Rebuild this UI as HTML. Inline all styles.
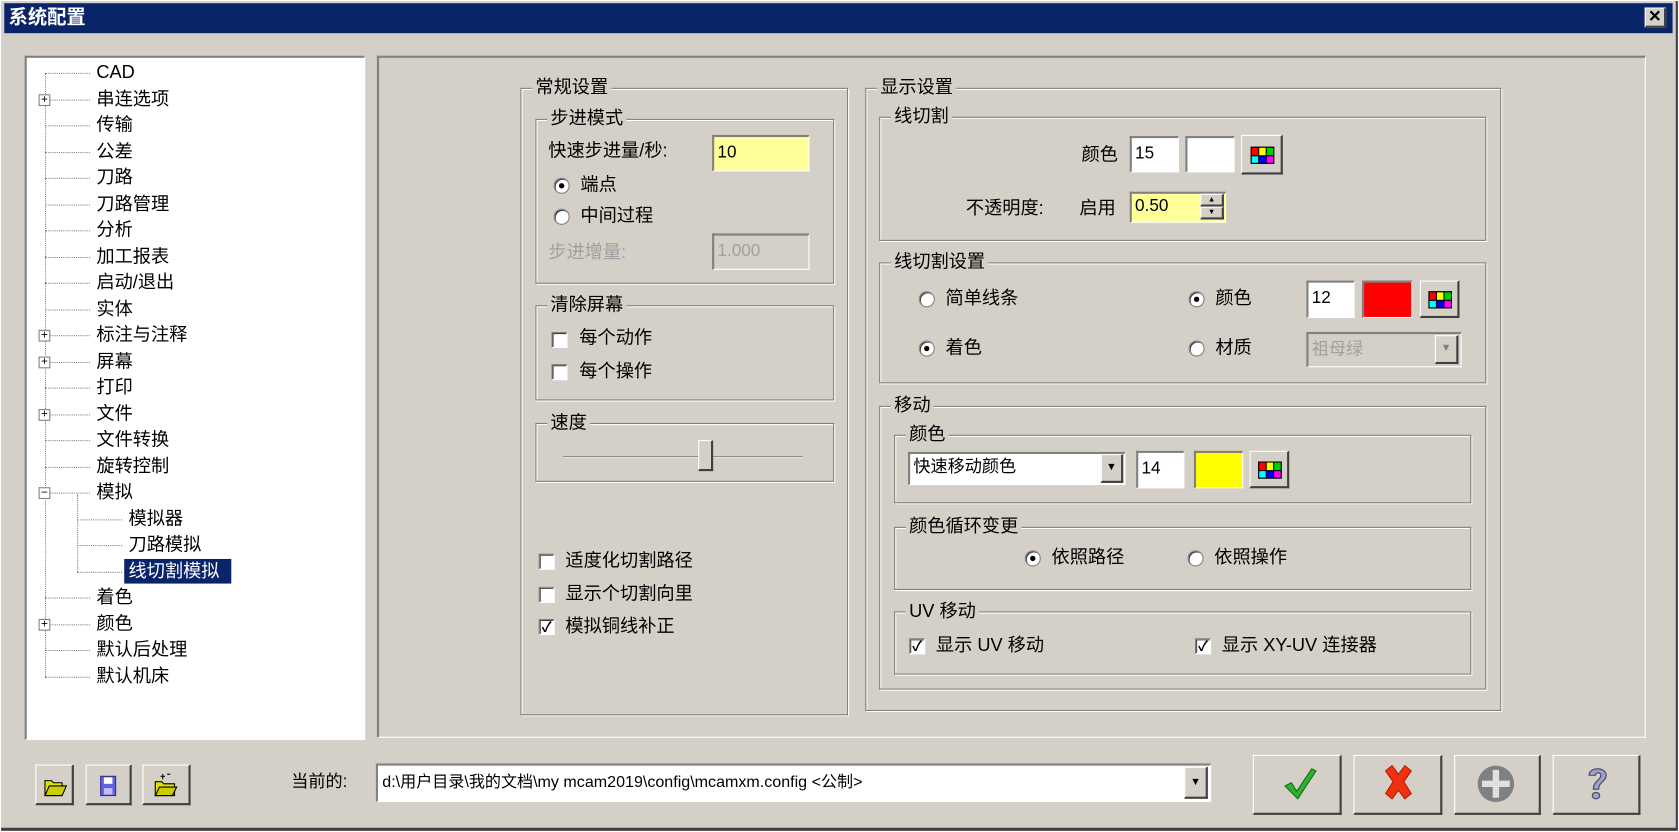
<!DOCTYPE html>
<html><head><meta charset="utf-8"><style>
html,body{margin:0;padding:0;width:1679px;height:832px;overflow:hidden;background:#d4d0c8}
#w{position:absolute;left:0;top:0;width:1568px;height:777px;transform:scale(1.07079);transform-origin:0 0;background:#d4d0c8;font-family:"Liberation Sans","Noto Sans CJK SC","WenQuanYi Zen Hei",sans-serif;font-size:17px;color:#000}
.a{position:absolute}
.t{position:absolute;white-space:nowrap;line-height:20px}
.g{position:absolute;border:1px solid #808080;box-shadow:inset 1px 1px 0 #fff,1px 1px 0 #fff}
.g>.l{position:absolute;left:10px;top:-11px;background:#d4d0c8;padding:0 3px;line-height:20px;white-space:nowrap}
.in{position:absolute;background:#fff;border-top:2px solid #808080;border-left:2px solid #808080;border-right:1px solid #fff;border-bottom:1px solid #fff;box-sizing:border-box;padding:5px 3px 0;line-height:20px;font-size:16px}
.btn{position:absolute;background:#d4d0c8;border-top:1px solid #fff;border-left:1px solid #fff;border-right:2px solid #404040;border-bottom:2px solid #404040;box-sizing:border-box}
.rad{position:absolute;width:13px;height:13px;border-radius:50%;background:#fff;border:1px solid #808080;box-shadow:inset 1px 1px 0 #404040}
.rad.on::after{content:"";position:absolute;left:4px;top:4px;width:5px;height:5px;border-radius:50%;background:#000}
.chk{position:absolute;width:13px;height:13px;background:#fff;border-top:1px solid #808080;border-left:1px solid #808080;border-right:1px solid #fff;border-bottom:1px solid #fff;box-shadow:inset 1px 1px 0 #404040;font-size:13px;line-height:13px;text-align:center;font-weight:bold}
.pal{position:absolute;left:50%;top:50%;margin:-7px 0 0 -10px;width:20px;height:14px;display:grid;grid-template-columns:repeat(3,1fr);border:1px solid #000;background:#000;gap:1px}
.hl{position:absolute;border-top:1px dotted #808080;height:0}
.vl{position:absolute;border-left:1px dotted #808080;width:0}
.pm{position:absolute;width:9px;height:9px;border:1px solid #808080;background:#fff;font-size:11px;line-height:9px;text-align:center}
</style></head><body><div id="w">
<div class="a" style="left:0;top:0;width:1568px;height:777px;border:1px solid #fff;box-sizing:border-box;box-shadow:inset -2px -3px 0 #404040"></div>
<div class="a" style="left:4px;top:3px;width:1558px;height:28px;background:#0a246a"></div>
<div class="t" style="left:8px;top:6px;color:#fff;font-weight:bold;font-size:18px">系统配置</div>
<div class="btn" style="left:1536px;top:7px;width:20px;height:19px;text-align:center;font-size:15px;line-height:16px;font-weight:bold">✕</div>

<div class="a" style="left:23px;top:52px;width:318px;height:639px;background:#fff;border-top:2px solid #808080;border-left:2px solid #808080;border-right:1px solid #fff;border-bottom:1px solid #fff;box-sizing:border-box"></div>
<div class="vl" style="left:42px;top:68px;height:564px"></div>
<div class="vl" style="left:72px;top:462px;height:72px"></div>
<div id="tree"></div>
<div class="a" style="left:116px;top:522px;width:100px;height:23px;background:#0a246a"></div>

<div class="a" style="left:352px;top:52px;width:1185px;height:637px;border-top:2px solid #808080;border-left:2px solid #808080;border-right:1px solid #fff;border-bottom:1px solid #fff;box-sizing:border-box"></div>

<div class="g" style="left:486px;top:82px;width:304px;height:584px"><span class="l">常规设置</span></div>
<div class="g" style="left:500px;top:111px;width:277px;height:152px"><span class="l">步进模式</span></div>
<div class="t" style="left:512px;top:131px">快速步进量/秒:</div>
<div class="in" style="left:665px;top:126px;width:91px;height:34px;background:#ffff99">10</div>
<div class="rad on" style="left:517px;top:166px"></div><div class="t" style="left:542px;top:163px">端点</div>
<div class="rad" style="left:517px;top:195px"></div><div class="t" style="left:542px;top:192px">中间过程</div>
<div class="t" style="left:512px;top:226px;color:#a0a0a0">步进增量:</div>
<div class="in" style="left:665px;top:218px;width:91px;height:34px;background:#d4d0c8;color:#a0a0a0">1.000</div>
<div class="g" style="left:500px;top:285px;width:277px;height:87px"><span class="l">清除屏幕</span></div>
<div class="chk" style="left:515px;top:310px"></div><div class="t" style="left:541px;top:306px">每个动作</div>
<div class="chk" style="left:515px;top:340px"></div><div class="t" style="left:541px;top:337px">每个操作</div>
<div class="g" style="left:500px;top:395px;width:277px;height:53px"><span class="l">速度</span></div>
<div class="a" style="left:526px;top:426px;width:224px;height:1px;background:#808080;border-bottom:1px solid #fff"></div>
<div class="btn" style="left:652px;top:411px;width:14px;height:29px"></div>
<div class="chk" style="left:503px;top:517px"></div><div class="t" style="left:528px;top:514px">适度化切割路径</div>
<div class="chk" style="left:503px;top:548px"></div><div class="t" style="left:528px;top:545px">显示个切割向里</div>
<div class="chk" style="left:503px;top:578px">✓</div><div class="t" style="left:528px;top:575px">模拟铜线补正</div>

<div class="g" style="left:808px;top:82px;width:592px;height:580px"><span class="l">显示设置</span></div>
<div class="g" style="left:821px;top:109px;width:565px;height:114px"><span class="l">线切割</span></div>
<div class="t" style="left:1010px;top:135px">颜色</div>
<div class="in" style="left:1055px;top:127px;width:46px;height:34px">15</div>
<div class="in" style="left:1107px;top:127px;width:46px;height:34px"></div>
<div class="btn" style="left:1159px;top:126px;width:39px;height:37px"><div class="pal"><i style="background:#f00"></i><i style="background:#ff0"></i><i style="background:#0c0"></i><i style="background:#0ff"></i><i style="background:#00f"></i><i style="background:#f0f"></i></div></div>
<div class="t" style="left:902px;top:185px">不透明度:</div>
<div class="t" style="left:1008px;top:185px">启用</div>
<div class="in" style="left:1055px;top:179px;width:90px;height:29px;background:#ffff99;line-height:20px;padding-top:2px">0.50</div>
<div class="btn" style="left:1121px;top:181px;width:22px;height:12px;font-size:7px;line-height:9px;text-align:center">▲</div>
<div class="btn" style="left:1121px;top:193px;width:22px;height:12px;font-size:7px;line-height:9px;text-align:center">▼</div>

<div class="g" style="left:821px;top:245px;width:565px;height:111px"><span class="l">线切割设置</span></div>
<div class="rad" style="left:858px;top:272px"></div><div class="t" style="left:883px;top:269px">简单线条</div>
<div class="rad on" style="left:1110px;top:272px"></div><div class="t" style="left:1135px;top:269px">颜色</div>
<div class="rad on" style="left:858px;top:318px"></div><div class="t" style="left:883px;top:315px">着色</div>
<div class="rad" style="left:1110px;top:318px"></div><div class="t" style="left:1135px;top:315px">材质</div>
<div class="in" style="left:1220px;top:262px;width:45px;height:35px">12</div>
<div class="in" style="left:1272px;top:262px;width:47px;height:35px;background:#f00"></div>
<div class="btn" style="left:1326px;top:262px;width:37px;height:35px"><div class="pal"><i style="background:#f00"></i><i style="background:#ff0"></i><i style="background:#0c0"></i><i style="background:#0ff"></i><i style="background:#00f"></i><i style="background:#f0f"></i></div></div>
<div class="in" style="left:1220px;top:310px;width:145px;height:33px;background:#d4d0c8;color:#a0a0a0">祖母绿</div>
<div class="btn" style="left:1340px;top:313px;width:22px;height:27px;color:#808080;font-size:10px;text-align:center;line-height:24px">▼</div>

<div class="g" style="left:821px;top:379px;width:565px;height:263px"><span class="l">移动</span></div>
<div class="g" style="left:835px;top:406px;width:537px;height:62px"><span class="l">颜色</span></div>
<div class="in" style="left:848px;top:422px;width:203px;height:31px;padding-top:3px">快速移动颜色</div>
<div class="btn" style="left:1028px;top:424px;width:21px;height:27px;font-size:10px;text-align:center;line-height:24px">▼</div>
<div class="in" style="left:1061px;top:421px;width:45px;height:35px">14</div>
<div class="in" style="left:1115px;top:421px;width:46px;height:35px;background:#ff0"></div>
<div class="btn" style="left:1167px;top:421px;width:37px;height:35px"><div class="pal"><i style="background:#f00"></i><i style="background:#ff0"></i><i style="background:#0c0"></i><i style="background:#0ff"></i><i style="background:#00f"></i><i style="background:#f0f"></i></div></div>
<div class="g" style="left:835px;top:492px;width:537px;height:57px"><span class="l">颜色循环变更</span></div>
<div class="rad on" style="left:957px;top:514px"></div><div class="t" style="left:982px;top:511px">依照路径</div>
<div class="rad" style="left:1109px;top:514px"></div><div class="t" style="left:1134px;top:511px">依照操作</div>
<div class="g" style="left:835px;top:571px;width:537px;height:57px"><span class="l">UV 移动</span></div>
<div class="chk" style="left:849px;top:596px">✓</div><div class="t" style="left:874px;top:593px">显示 UV 移动</div>
<div class="chk" style="left:1116px;top:596px">✓</div><div class="t" style="left:1141px;top:593px">显示 XY-UV 连接器</div>

<div class="btn" style="left:33px;top:714px;width:36px;height:38px"><svg width="34" height="36" viewBox="0 0 34 36"><path d="M8 14h6l2 2h8v12H8z" fill="#e0e000" stroke="#000"/><path d="M8 28l4-9h16l-4 9z" fill="#cccc00" stroke="#000"/></svg></div>
<div class="btn" style="left:80px;top:714px;width:43px;height:38px"><svg width="40" height="36" viewBox="0 0 40 36"><path d="M13 10h14v18H13z" fill="#6060e0" stroke="#303090"/><rect x="16" y="11" width="8" height="6" fill="#fff"/><rect x="16" y="21" width="8" height="6" fill="#c0c0ff"/></svg></div>
<div class="btn" style="left:133px;top:714px;width:45px;height:38px"><svg width="42" height="36" viewBox="0 0 42 36"><path d="M11 15h6l2 2h10v11H11z" fill="#e0e000" stroke="#000"/><path d="M11 28l4-8h16l-4 8z" fill="#cccc00" stroke="#000"/><path d="M18 8v5M16 10h4M22 8h3" stroke="#000" fill="none"/></svg></div>
<div class="t" style="left:272px;top:721px;font-size:16px">当前的:</div>
<div class="in" style="left:351px;top:713px;width:780px;height:36px;font-size:15px;line-height:26px;padding:3px 4px 0">d:\用户目录\我的文档\my mcam2019\config\mcamxm.config &lt;公制&gt;</div>
<div class="btn" style="left:1106px;top:716px;width:22px;height:30px;font-size:10px;text-align:center;line-height:28px">▼</div>
<div class="btn" style="left:1170px;top:705px;width:83px;height:56px"><svg width="80" height="52" viewBox="0 0 80 52"><path d="M29 28l6-3 5 8 14-21 4 2-17 26z" fill="#30b030" stroke="#107010"/></svg></div>
<div class="btn" style="left:1264px;top:705px;width:83px;height:56px"><svg width="80" height="52" viewBox="0 0 80 52"><path d="M29 14l6-5 6 8 6-8 6 5-7 10 7 11-6 5-6-8-6 8-6-5 7-11z" fill="#f03010" stroke="#b02000"/></svg></div>
<div class="btn" style="left:1358px;top:705px;width:81px;height:56px"><svg width="78" height="52" viewBox="0 0 78 52"><circle cx="38" cy="26" r="17" fill="#808080"/><path d="M35 13h6v10h10v6H41v10h-6V29H25v-6h10z" fill="#e0e0e0"/></svg></div>
<div class="btn" style="left:1450px;top:705px;width:82px;height:56px"><svg width="80" height="52" viewBox="0 0 80 52"><path d="M33 18c0-8 16-8 16 0 0 6-7 6-7 13h-5c0-8 7-8 7-13 0-3-5-3-5 0z" fill="#a0a0c8" stroke="#404060"/><ellipse cx="39.5" cy="37" rx="3.5" ry="3" fill="#a0a0c8" stroke="#404060"/></svg></div>
</div>
<script>
var items=[["CAD",0,0],["串连选项",0,"+"],["传输",0,0],["公差",0,0],["刀路",0,0],["刀路管理",0,0],["分析",0,0],["加工报表",0,0],["启动/退出",0,0],["实体",0,0],["标注与注释",0,"+"],["屏幕",0,"+"],["打印",0,0],["文件",0,"+"],["文件转换",0,0],["旋转控制",0,0],["模拟",0,"−"],["模拟器",1,0],["刀路模拟",1,0],["线切割模拟",1,0],["着色",0,0],["颜色",0,"+"],["默认后处理",0,0],["默认机床",0,0]];
var h="";items.forEach(function(it,i){var y=68+i*24.52;var x0=it[1]?72:42,tx=it[1]?120:90;
h+='<div class="hl" style="left:'+x0+'px;top:'+y+'px;width:'+(tx-x0-6)+'px"></div>';
if(it[2])h+='<div class="pm" style="left:36px;top:'+(y-5)+'px">'+it[2]+'</div>';
h+='<div class="t" style="left:'+tx+'px;top:'+(y-10)+'px;z-index:2;'+(i==19?'color:#fff':'')+'">'+it[0]+'</div>';});
document.getElementById("tree").innerHTML=h;
</script>
</body></html>
